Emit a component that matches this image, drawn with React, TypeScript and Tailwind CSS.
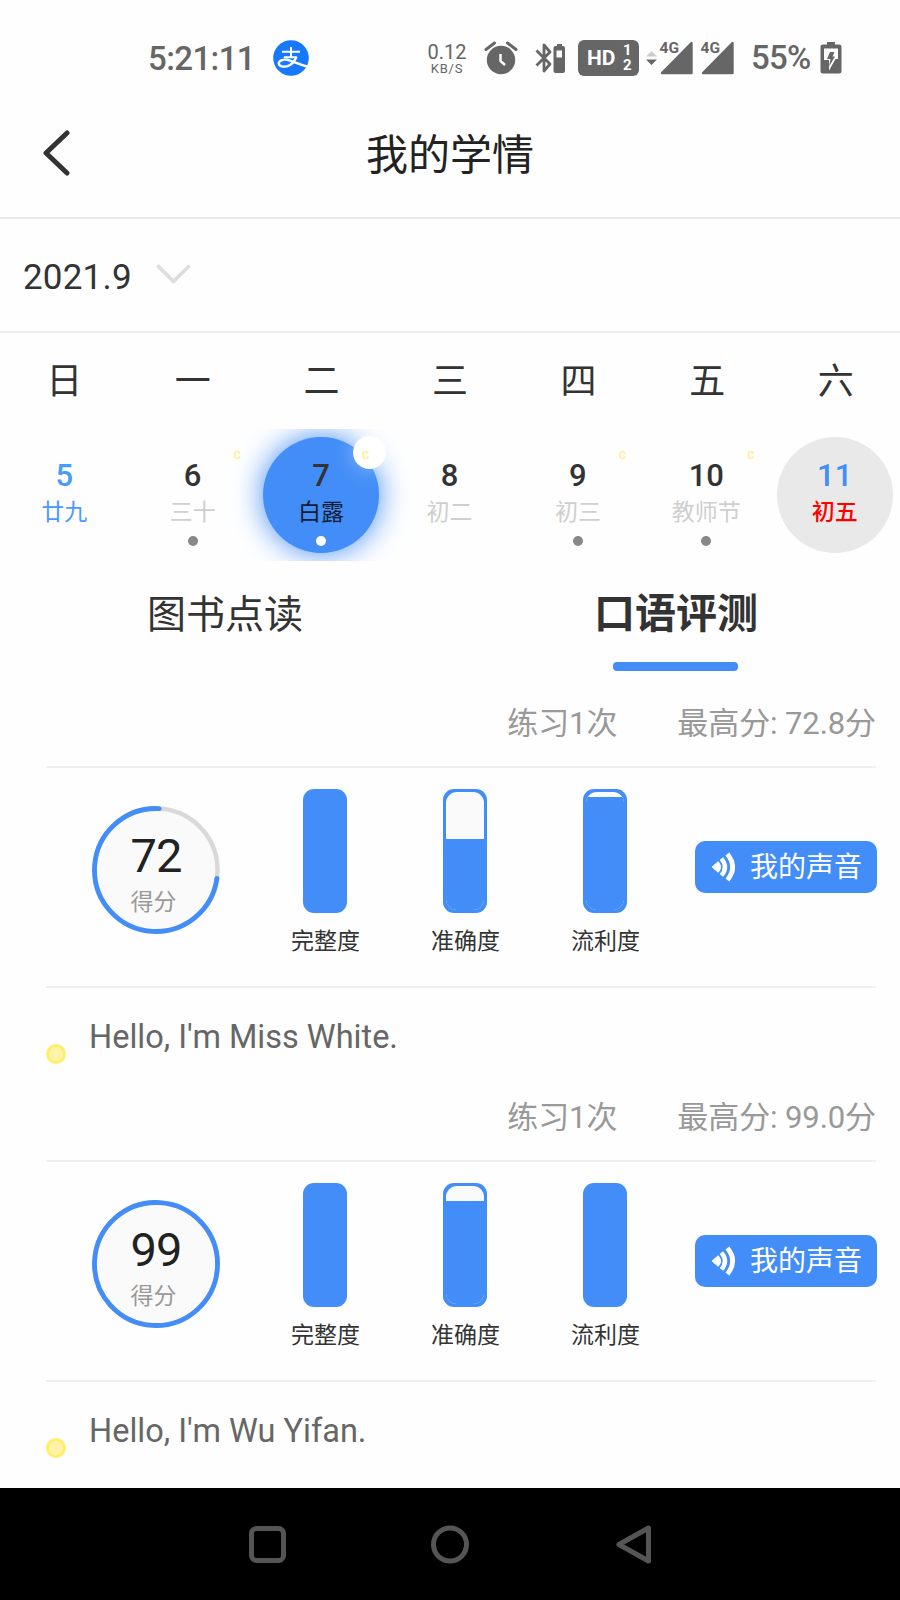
import clsx from "clsx";

interface Day {
  week: string;
  date: number;
  lunar: string;
  mark?: boolean;
  dot?: boolean;
}

interface Bar {
  label: string;
  // height of the unfilled part, px
  gap: number;
}

interface Practice {
  score: number;
  best: string;
  text: string;
  bars: Bar[];
}

const days: Day[] = [
  { week: "日", date: 5, lunar: "廿九" },
  { week: "一", date: 6, lunar: "三十", mark: true, dot: true },
  { week: "二", date: 7, lunar: "白露", mark: true, dot: true },
  { week: "三", date: 8, lunar: "初二" },
  { week: "四", date: 9, lunar: "初三", mark: true, dot: true },
  { week: "五", date: 10, lunar: "教师节", mark: true, dot: true },
  { week: "六", date: 11, lunar: "初五" },
];

const practices: Practice[] = [
  {
    score: 72,
    best: "72.8",
    text: "Hello, I'm Miss White.",
    bars: [
      { label: "完整度", gap: 0 },
      { label: "准确度", gap: 47 },
      { label: "流利度", gap: 5 },
    ],
  },
  {
    score: 99,
    best: "99.0",
    text: "Hello, I'm Wu Yifan.",
    bars: [
      { label: "完整度", gap: 0 },
      { label: "准确度", gap: 15 },
      { label: "流利度", gap: 0 },
    ],
  },
];

function AlipayIcon() {
  return (
    <svg className="ml-[20px] size-[36px]" viewBox="0 0 36 36" fill="none">
      <circle cx="18" cy="18" r="17.8" fill="#1677ff" />
      <g stroke="#fff">
        <path d="M9 11.8h18M18 7v10.2M10.8 17.2h13" strokeWidth="2" />
        <path
          d="M23.4 16.8c-1.6 4.2-3.6 6.7-6.8 8.5-3.7 2.1-10.400 1.9-10.800-1.6-.3-3 4.200-4.7 8.200-3.9 4.6.9 10.2 3.900 20 6.700"
          strokeWidth="2.4"
        />
      </g>
    </svg>
  );
}

function AlarmIcon() {
  return (
    <svg className="ml-[18px] h-[34px] w-[34px]" viewBox="0 0 34 34" fill="none">
      <circle cx="17" cy="19" r="14.2" fill="#666" />
      <path d="M2 8.5L10.5 2M32 8.5L23.5 2" stroke="#666" strokeWidth="3" strokeLinecap="round" />
      <path d="M16.5 13v7l4.5 4" stroke="#fff" strokeWidth="2.4" />
    </svg>
  );
}

function BluetoothIcon() {
  return (
    <svg className="ml-[17px] h-[32px] w-[32px]" viewBox="0 0 32 32" fill="none">
      <path
        d="M1.5 8.5l13.500 13.500L9 29V3l6 7L1.500 23.500"
        stroke="#666"
        strokeWidth="2.8"
        strokeLinejoin="round"
      />
      <path d="M22 4V2h5v2h1a2 2 0 0 1 2 2v23a2 2 0 0 1-2 2h-7.500a2 2 0 0 1-2-2V6a2 2 0 0 1 2-2z" fill="#666" />
      <path d="M21.500 8.500h5.500v7h-5.500z" fill="#fff" />
    </svg>
  );
}

function Signal({ className }: { className: string }) {
  return (
    <svg className={className} viewBox="0 0 34 34">
      <path d="M31.500 2v30h-29.500z" fill="#666" stroke="#666" strokeWidth="2.400" strokeLinejoin="round" />
      <text
        x="-0.500"
        y="11.800"
        fill="#666"
        stroke="#fefefe"
        strokeWidth="2"
        paintOrder="stroke"
        fontFamily="Roboto, sans-serif"
        fontSize="15.500"
        fontWeight="700"
      >
        4G
      </text>
    </svg>
  );
}

function StatusBar() {
  return (
    <div className="flex h-[92px] items-start pt-[23px] text-[#666]">
      <div className="flex h-[70px] w-full shrink-0 items-center">
        <span className="mt-px ml-[148px] w-[105px] whitespace-nowrap text-[33px] font-medium leading-none tracking-[-0.6px]">
          5:21:11
        </span>
        <AlipayIcon />
        <div className="ml-[119px] flex w-[38px] flex-col items-center">
          <span className="text-[20px] leading-[20px]">0.12</span>
          <span className="text-[13px] leading-[13px] tracking-[0.8px]">KB/S</span>
        </div>
        <AlarmIcon />
        <BluetoothIcon />
        <div className="ml-[11px] flex h-[36px] w-[61px] items-center rounded-[6px] bg-[#666] pl-[9px] font-bold text-white">
          <span className="w-[36px] text-[21px] leading-none">HD</span>
          <span className="flex flex-col text-[15px] leading-[15px]">
            <span>1</span>
            <span>2</span>
          </span>
        </div>
        <svg className="ml-[7px] h-[14px] w-[11px]" viewBox="0 0 11 14">
          <path d="M0 5.500L5.500 0 11 5.500z" fill="#ccc" />
          <path d="M0 8.500L5.500 14 11 8.500z" fill="#666" />
        </svg>
        <Signal className="ml-[3px] size-[34px] overflow-visible" />
        <Signal className="ml-[7px] size-[34px] overflow-visible" />
        <span className="mb-px ml-[16px] w-[61px] whitespace-nowrap text-[33px] font-medium leading-none tracking-[-0.7px]">
          55%
        </span>
        <svg className="ml-[8px] h-[32px] w-[22px]" viewBox="0 0 22 32">
          <path d="M7 2.500V0h8v2.500h4a2.500 2.500 0 0 1 2.500 2.500v24a2.500 2.500 0 0 1-2.500 2.500H3A2.500 2.500 0 0 1 .5 29V5A2.500 2.500 0 0 1 3 2.500z" fill="#666" />
          <path d="M4 6.500h14v10.500h-2.500L9 28.500V18H4z" fill="#fff" />
          <path d="M10 10h4.500l-2 4.500H15l-6 10 1.500-7.500H7z" fill="#666" />
        </svg>
      </div>
    </div>
  );
}

function DayCell({ day }: { day: Day }) {
  const selected = day.date === 7;
  const today = day.date === 11;
  return (
    <div className="relative flex h-[132px] flex-1 justify-center pt-[8px]">
      <div
        className={clsx(
          "flex size-[116px] shrink-0 flex-col items-center rounded-full pt-[22px]",
          selected && "bg-[#428df7] shadow-[0_0_30px_#428df7]",
          today && "bg-[#e9e9e9]",
        )}
      >
        <span
          className={clsx(
            "relative z-10 text-[31px] font-medium leading-[34px]",
            day.date === 5 ? "text-[#4a9bf5]" : today ? "text-[#428df7]" : "text-[#333]",
          )}
        >
          {day.date}
        </span>
        <span
          className={clsx(
            "whitespace-nowrap text-[23px] leading-[40px]",
            day.date === 5
              ? "text-[#4a9bf5]"
              : selected
                ? "text-[#0d1c31]"
                : today
                  ? "font-medium text-[#f00]"
                  : "text-[#cfcfcf]",
          )}
        >
          {day.lunar}
        </span>
        {day.dot && (
          <span className={clsx("mt-[3px] size-[10px] rounded-full", selected ? "bg-white" : "bg-[#888]")} />
        )}
      </div>
      {selected && (
        <span className="absolute -right-px top-[7px] size-[33px] rounded-full bg-white shadow-[0_0_22px_rgba(255,255,255,0.4)]" />
      )}
      {day.mark && (
        <span className="absolute right-[16px] top-[19px] text-[11px] font-medium leading-[16px] text-[#fdee7c]">C</span>
      )}
    </div>
  );
}

function ScoreRing({ score }: { score: number }) {
  const r = 61.5;
  const len = 2 * Math.PI * r;
  // the arc starts slightly past twelve and runs anticlockwise
  const part = score > 95 ? 1 : 0.735;
  return (
    <div className="relative ml-[46px] size-[128px]">
      <svg className="absolute inset-0" viewBox="0 0 128 128" fill="none">
        <circle cx="64" cy="64" r={r} fill="#fafafa" stroke="#d9d9d9" strokeWidth="4.500" />
        <circle
          cx="64"
          cy="64"
          r={r}
          stroke="#428df7"
          strokeWidth="4.800"
          strokeLinecap="round"
          strokeDasharray={`${len * part} ${len}`}
          transform="translate(128 0) scale(-1 1) rotate(-93 64 64)"
        />
      </svg>
      <div className="relative flex flex-col items-center pt-[22px]">
        <span className="text-[47px] leading-[56px] tracking-[-0.8px] text-[#222]">{score}</span>
        <span className="mr-[5px] text-[23px] leading-[38px] text-[#999]">得分</span>
      </div>
    </div>
  );
}

function ScoreBar({ bar }: { bar: Bar }) {
  return (
    <div className="flex w-[140px] flex-col items-center">
      <div className="h-[124px] w-[44px] rounded-[11px] bg-[#428df7] p-[3px]">
        <div className="flex h-full flex-col justify-end overflow-hidden rounded-[11px] bg-[#fafafa]">
          <div className="w-full bg-[#428df7]" style={{ height: 118 - bar.gap }} />
        </div>
      </div>
      <span className="mt-[10px] pl-px text-[23px] leading-[38px] text-[#333]">{bar.label}</span>
    </div>
  );
}

function VoiceButton() {
  return (
    <button className="mt-[73px] flex h-[52px] w-[182px] items-center rounded-[10px] bg-[#428df7] pl-[17px] text-white">
      <svg className="h-[30px] w-[24px]" viewBox="0 0 25 30" fill="none">
        <path d="M0 15L6.500 9.500q5 5.500 0 11z" fill="#fff" stroke="#fff" strokeLinejoin="round" />
        <path d="M9.800 6.200q7.400 8.800 0 17.600" stroke="#fff" strokeWidth="4.600" />
        <path d="M16 1.500q11 13.500 0 27" stroke="#fff" strokeWidth="5" />
      </svg>
      <span className="ml-[14px] pt-[2px] text-[28px] leading-[54px]">我的声音</span>
    </button>
  );
}

function PracticeCard({ item }: { item: Practice }) {
  return (
    <section className="h-[394px] pl-[46px] pr-[24px]">
      <div className="flex h-[85px] items-center justify-end gap-[60px] whitespace-nowrap text-[31px] leading-[86px] tracking-[-0.1px] text-[#999]">
        <span>练习1次</span>
        <span>最高分: {item.best}分</span>
      </div>
      <div className="flex h-[222px] border-y-2 border-[#f0f0f0]">
        <div className="pt-[38px]">
          <ScoreRing score={item.score} />
        </div>
        <div className="ml-[35px] flex pt-[21px]">
          {item.bars.map((bar) => (
            <ScoreBar key={bar.label} bar={bar} />
          ))}
        </div>
        <div className="-mr-px ml-auto">
          <VoiceButton />
        </div>
      </div>
      <div className="flex">
        <span className="mt-[56px] size-[20px] rounded-full border-[3px] border-[#ffee6b] bg-[#fff3a8]" />
        <p className="ml-[23px] mt-[27px] text-[32.5px] leading-[44px] text-[#666]">{item.text}</p>
      </div>
    </section>
  );
}

export default function App() {
  return (
    <div className="flex h-[1600px] w-[900px] flex-col overflow-hidden bg-[#fefefe] font-[Roboto,'Noto_Sans_CJK_SC',sans-serif]">
      <StatusBar />
      <header className="flex h-[127px] items-center border-b-2 border-[#e8e8e8] px-[43px]">
        <svg className="mb-[4px] h-[46px] w-[27px]" viewBox="0 0 27 46" fill="none">
          <path d="M24 3L3 23 24 43" stroke="#333" strokeWidth="5" strokeLinecap="round" strokeLinejoin="round" />
        </svg>
        <h1 className="flex-1 pr-[27px] pt-[2px] text-center text-[42px] leading-[60px] text-[#222]">我的学情</h1>
      </header>
      <div className="flex h-[114px] items-center border-b-2 border-[#ececec] pl-[23px]">
        <span className="w-[133px] pt-[5px] text-[35px] leading-none tracking-[0.2px] text-[#333]">2021.9</span>
        <svg className="mb-[2px] h-[20px] w-[35px]" viewBox="0 0 35 20" fill="none">
          <path d="M1.500 1.500l16 16 16-16" stroke="#ddd" strokeWidth="3.600" />
        </svg>
      </div>
      <div className="flex h-[96px]">
        {days.map((day) => (
          <span key={day.week} className="flex-1 text-center text-[36px] leading-[98px] text-[#333]">
            {day.week}
          </span>
        ))}
      </div>
      <div className="flex h-[132px] shrink-0 overflow-hidden pr-px">
        {days.map((day) => (
          <DayCell key={day.date} day={day} />
        ))}
      </div>
      <div className="flex h-[120px] text-[#333]">
        <div className="flex-1 text-center text-[39px] leading-[108px]">图书点读</div>
        <div className="flex flex-1 flex-col items-center">
          <span className="ml-[2px] h-[101px] text-[41px] font-bold leading-[107px]">口语评测</span>
          <span className="h-[9px] w-[125px] rounded-[4px] bg-[#428df7]" />
        </div>
      </div>
      <main className="h-[807px] overflow-hidden">
        {practices.map((item) => (
          <PracticeCard key={item.text} item={item} />
        ))}
      </main>
      <nav className="flex h-[112px] shrink-0 items-center justify-between bg-black pl-[248px] pr-[248px]">
        <svg className="size-[39px]" viewBox="0 0 39 39" fill="none" stroke="#555" strokeWidth="5">
          <rect x="3.500" y="3.500" width="32" height="32" rx="5" />
        </svg>
        <svg className="size-[39px]" viewBox="0 0 39 39" fill="none" stroke="#555" strokeWidth="5">
          <circle cx="19" cy="19.500" r="16.500" />
        </svg>
        <svg className="size-[39px]" viewBox="0 0 39 39" fill="none" stroke="#555" strokeWidth="5" strokeLinejoin="round">
          <path d="M6 19.500L35.500 3v33z" />
        </svg>
      </nav>
    </div>
  );
}
